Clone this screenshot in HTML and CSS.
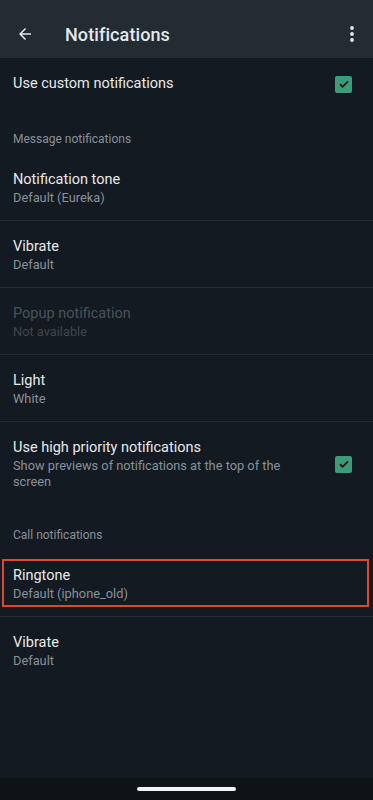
FILE: index.html
```html
<!DOCTYPE html>
<html lang="en">

<head>
  <meta charset="UTF-8" />
  <meta name="viewport" content="width=device-width, initial-scale=1.0" />
  <title>Notifications</title>
  <link rel="stylesheet" href="styles.css">
</head>

<body>
  <div class="screen">
    <header class="appbar">
      <svg class="back" width="18" height="18" viewBox="0 0 24 24">
        <path d="M20 11H7.83l5.59-5.59L12 4l-8 8 8 8 1.41-1.41L7.83 13H20v-2z" fill="#e6e9eb" />
      </svg>
      <h1 class="title">Notifications</h1>
      <svg class="more" width="6" height="18" viewBox="0 0 6 18">
        <circle cx="3" cy="3" r="1.9" fill="#e6e9eb" />
        <circle cx="3" cy="9" r="1.9" fill="#e6e9eb" />
        <circle cx="3" cy="15" r="1.9" fill="#e6e9eb" />
      </svg>
    </header>

    <main class="list">
      <div class="row toggle">
        <div class="text">
          <div class="label">Use custom notifications</div>
        </div>
        <span class="check"><svg width="12" height="12" viewBox="0 0 12 12"><path d="M2 6.2l2.6 2.6L10 3.4" fill="none" stroke="#0f1a17" stroke-width="1.8" /></svg></span>
      </div>

      <div class="section">Message notifications</div>

      <div class="row item">
        <div class="text">
          <div class="label">Notification tone</div>
          <div class="sub">Default (Eureka)</div>
        </div>
      </div>
      <div class="row item">
        <div class="text">
          <div class="label">Vibrate</div>
          <div class="sub">Default</div>
        </div>
      </div>
      <div class="row item disabled">
        <div class="text">
          <div class="label">Popup notification</div>
          <div class="sub">Not available</div>
        </div>
      </div>
      <div class="row item">
        <div class="text">
          <div class="label">Light</div>
          <div class="sub">White</div>
        </div>
      </div>
      <div class="row item last">
        <div class="text">
          <div class="label">Use high priority notifications</div>
          <div class="sub">Show previews of notifications at the top of the screen</div>
        </div>
        <span class="check"><svg width="12" height="12" viewBox="0 0 12 12"><path d="M2 6.2l2.6 2.6L10 3.4" fill="none" stroke="#0f1a17" stroke-width="1.8" /></svg></span>
      </div>

      <div class="section">Call notifications</div>

      <div class="row item marked">
        <div class="text">
          <div class="label">Ringtone</div>
          <div class="sub">Default (iphone_old)</div>
        </div>
      </div>
      <div class="row item last">
        <div class="text">
          <div class="label">Vibrate</div>
          <div class="sub">Default</div>
        </div>
      </div>
    </main>

    <footer class="navbar">
      <span class="pill"></span>
    </footer>
  </div>
</body>

</html>
```

FILE: styles.css
```css
* {
  margin: 0;
  padding: 0;
  box-sizing: border-box;
}

body {
  background-color: #141a21;
  font-family: Roboto, "Noto Sans", sans-serif;
  color: #e6e9eb;
}

.screen {
  display: flex;
  flex-direction: column;
  height: 800px;
}

.appbar {
  display: flex;
  align-items: center;
  height: 58px;
  padding: 10px 18px 0 16px;
  background-color: #232b33;
}

.back {
  flex-shrink: 0;
}

.title {
  flex-grow: 1;
  margin-left: 31px;
  font-size: 18px;
  font-weight: 500;
  letter-spacing: 0.1px;
}

.list {
  flex-grow: 1;
}

.row {
  display: flex;
  align-items: center;
  padding: 16px 21px 14px 13px;
  position: relative;
}

.toggle {
  height: 50px;
}

.item {
  border-bottom: 1px solid #232b32;
}

.item.last {
  border-bottom: none;
}

.text {
  flex-grow: 1;
  margin-right: 30px;
}

.label {
  font-size: 14.5px;
  line-height: 20px;
}

.sub {
  font-size: 12.8px;
  line-height: 16px;
  color: #88919a;
}

.disabled .label {
  color: #4a5259;
}

.disabled .sub {
  color: #3e464d;
}

.section {
  padding: 23px 13px 7px;
  font-size: 12px;
  line-height: 16px;
  color: #88919a;
}

.check {
  display: flex;
  align-items: center;
  justify-content: center;
  width: 17px;
  height: 17px;
  border-radius: 2px;
  background-color: #3d9b79;
  flex-shrink: 0;
}

/* annotation box drawn over the row */
.marked::after {
  content: "";
  position: absolute;
  top: 9px;
  bottom: 9px;
  left: 2px;
  right: 4px;
  border: 2.5px solid #e0472c;
}

.navbar {
  display: flex;
  justify-content: center;
  align-items: center;
  height: 22px;
  background-color: #0e1318;
}

.pill {
  width: 99px;
  height: 4px;
  border-radius: 2px;
  background-color: #f2f3f5;
}
```
